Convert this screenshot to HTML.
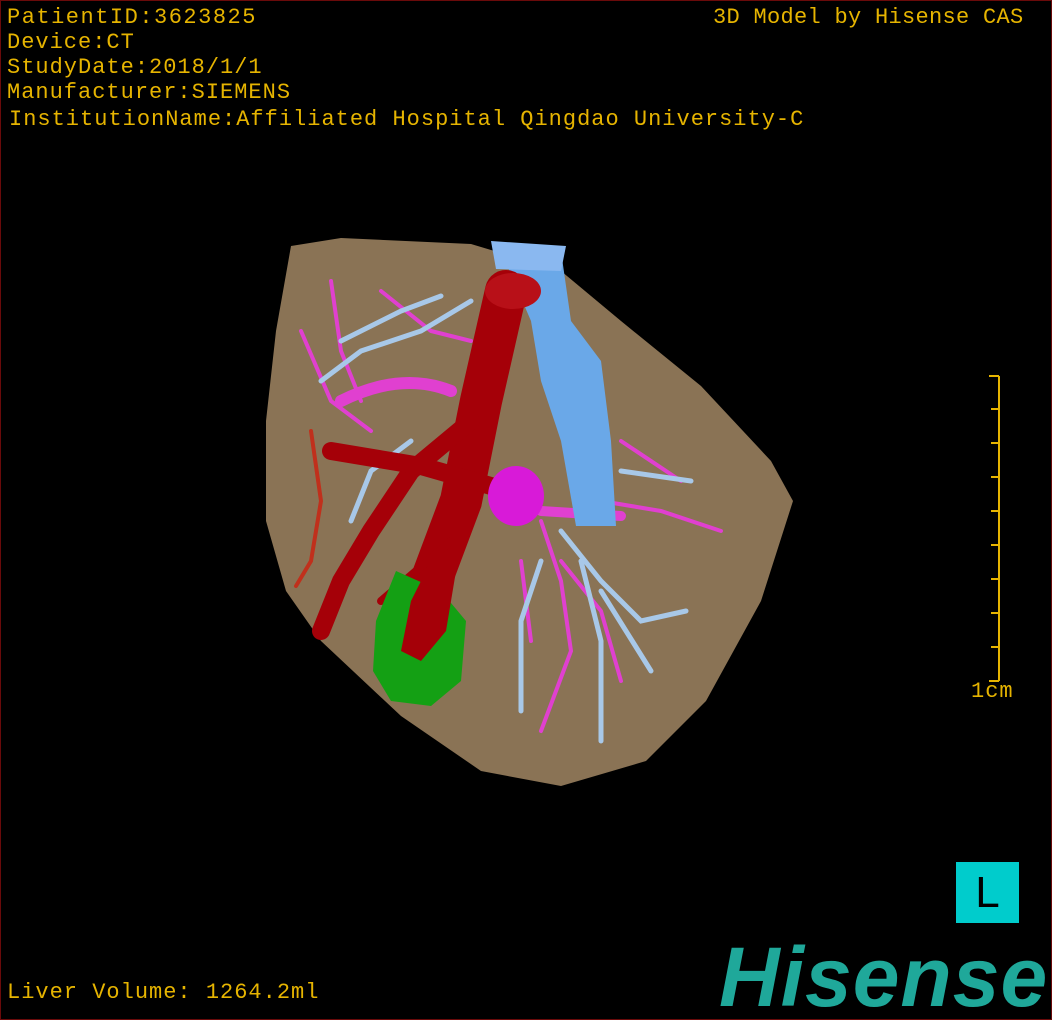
<!DOCTYPE html>
<html><head><style>
html,body{margin:0;padding:0;background:#000}
#w{position:relative;width:1050px;height:1018px;border:1px solid #6a0a0a;overflow:hidden;background:#000;font-family:"Liberation Sans","Noto Sans CJK SC",sans-serif}
.t{position:absolute;color:#e6b400;font-family:"Liberation Mono",monospace;font-size:22px;letter-spacing:1px;white-space:nowrap;line-height:25px}
</style></head><body><div id="w">
<svg width="1050" height="1018" style="position:absolute;left:0;top:0">
<path d="M290,245 L340,237 L470,243 L560,270 L620,320 L700,385 L770,460 L792,500 L760,600 L705,700 L645,760 L560,785 L480,770 L400,715 L320,640 L285,590 L265,520 L265,420 L275,330 Z" fill="#8a7355"/>
<g fill="none" stroke-linecap="round">
<g stroke="#e040d0" stroke-width="4">
<path d="M300,330 L330,400 L370,430 M330,280 L340,350 L360,400 M380,290 L430,330 L470,340 M540,520 L560,580 L570,650 L540,730 M560,560 L600,610 L620,680 M600,500 L660,510 L720,530 M620,440 L680,480 M520,560 L530,640"/>
<path d="M340,400 Q400,370 450,390" stroke-width="12"/>
<path d="M540,510 L620,515" stroke-width="10"/>
</g>
<g stroke="#a8c8e8" stroke-width="5">
<path d="M320,380 L360,350 L420,330 L470,300 M340,340 L400,310 L440,295 M560,530 L600,580 L640,620 L685,610 M580,560 L600,640 L600,740 M540,560 L520,620 L520,710 M620,470 L690,480 M350,520 L370,470 L410,440 M600,590 L650,670"/>
</g>
<path d="M560,250 L570,320 L600,360 L610,440 L615,525 L575,525 L560,440 L540,380 L530,320 L500,250 Z" fill="#6aa8e8" stroke="none"/>
<path d="M490,240 L565,245 L560,270 L495,268 Z" fill="#8ab8f0" stroke="none"/>
<g stroke="#a50008">
<path d="M505,290 L480,400 L460,500 L430,580 L410,650" stroke-width="42"/>
<path d="M470,420 L410,470 L370,530 L340,580 L320,630" stroke-width="18"/>
<path d="M330,450 L420,465 L490,485" stroke-width="18"/>
<path d="M450,540 L380,600" stroke-width="8"/>
<path d="M310,430 L320,500 L310,560 L295,585" stroke-width="4" stroke="#c0301c"/>
</g>
<ellipse cx="512" cy="290" rx="28" ry="18" fill="#b81018" stroke="none"/>
<ellipse cx="515" cy="495" rx="28" ry="30" fill="#d81ad8" stroke="none"/>
<path d="M395,570 L440,590 L465,620 L460,680 L430,705 L390,700 L372,670 L375,620 Z" fill="#14a014" stroke="none"/>
<path d="M410,600 L430,560 L460,540 L445,630 L420,660 L400,650 Z" fill="#a50008" stroke="none"/>
</g>
<g stroke="#e6b400" stroke-width="2">
<line x1="998" y1="375" x2="998" y2="680"/>
<line x1="988" y1="375" x2="998" y2="375"/><line x1="990" y1="408" x2="998" y2="408"/><line x1="990" y1="442" x2="998" y2="442"/><line x1="990" y1="476" x2="998" y2="476"/><line x1="990" y1="510" x2="998" y2="510"/><line x1="990" y1="544" x2="998" y2="544"/><line x1="990" y1="578" x2="998" y2="578"/><line x1="990" y1="612" x2="998" y2="612"/><line x1="990" y1="646" x2="998" y2="646"/><line x1="988" y1="680" x2="998" y2="680"/>
</g>
</svg>
<div class="t" style="left:6px;top:4px;letter-spacing:1.5px">PatientID:3623825</div>
<div class="t" style="left:6px;top:29px">Device:CT</div>
<div class="t" style="left:6px;top:54px">StudyDate:2018/1/1</div>
<div class="t" style="left:6px;top:79px">Manufacturer:SIEMENS</div>
<div class="t" style="left:8px;top:106px">InstitutionName:Affiliated Hospital Qingdao University-C</div>
<div class="t" style="left:712px;top:4px;letter-spacing:0.3px">3D Model by Hisense CAS</div>
<div class="t" style="left:970px;top:678px">1cm</div>
<div class="t" style="left:6px;top:979px">Liver Volume: 1264.2ml</div>
<div style="position:absolute;left:955px;top:861px;width:63px;height:61px;background:#00cccc;color:#000;font-size:44px;line-height:61px;text-align:center">L</div>
<div style="position:absolute;left:718px;top:934px;color:#1fa89a;font-size:84px;font-weight:bold;font-style:italic;letter-spacing:1px;line-height:84px">Hisense</div>
</div></body></html>
